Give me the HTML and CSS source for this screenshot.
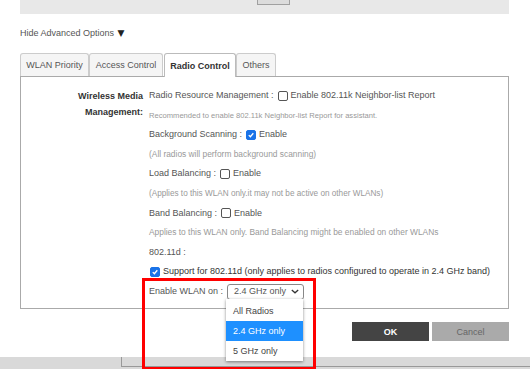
FILE: index.html
```html
<!DOCTYPE html>
<html>
<head>
<meta charset="utf-8">
<link rel="stylesheet" href="styles.css">
</head>
<body>
<div class="topbar"><span class="topbtn"></span></div>
<div class="advanced">Hide Advanced Options <span class="tri">▼</span></div>
<div class="tabs">
  <div class="tab t1">WLAN Priority</div>
  <div class="tab t2">Access Control</div>
  <div class="tab t3 active">Radio Control</div>
  <div class="tab t4">Others</div>
</div>
<div class="panel">
  <div class="label">Wireless Media<br>Management:</div>
  <div class="rows">
    <div class="row">Radio Resource Management : <span class="cb"></span> Enable 802.11k Neighbor-list Report</div>
    <div class="row note small">Recommended to enable 802.11k Neighbor-list Report for assistant.</div>
    <div class="row">Background Scanning : <span class="cb on"><svg viewBox="0 0 10 10"><path d="M2.2 5.2 L4.2 7.2 L7.9 2.8" fill="none" stroke="#fff" stroke-width="1.6"/></svg></span> Enable</div>
    <div class="row note">(All radios will perform background scanning)</div>
    <div class="row">Load Balancing : <span class="cb"></span> Enable</div>
    <div class="row note mid">(Applies to this WLAN only.it may not be active on other WLANs)</div>
    <div class="row">Band Balancing : <span class="cb"></span> Enable</div>
    <div class="row note">Applies to this WLAN only. Band Balancing might be enabled on other WLANs</div>
    <div class="row">802.11d :</div>
    <div class="row dark"><span class="cb on"><svg viewBox="0 0 10 10"><path d="M2.2 5.2 L4.2 7.2 L7.9 2.8" fill="none" stroke="#fff" stroke-width="1.6"/></svg></span> Support for 802.11d (only applies to radios configured to operate in 2.4 GHz band)</div>
    <div class="row">Enable WLAN on : <span class="select">2.4 GHz only<svg class="chev" viewBox="0 0 10 6"><path d="M1 1 L5 4.6 L9 1" fill="none" stroke="#333" stroke-width="1.6"/></svg></span></div>
  </div>
</div>
<div class="actions">
  <div class="btn ok">OK</div>
  <div class="btn cancel">Cancel</div>
</div>
<div class="bottom"><div class="bottombox"></div></div>
<div class="dropdown">
  <div class="opt">All Radios</div>
  <div class="opt sel">2.4 GHz only</div>
  <div class="opt">5 GHz only</div>
</div>
<div class="redbox"></div>
</body>
</html>
```
FILE: styles.css
```css
html, body { margin: 0; padding: 0; background: #fff; }
body {
  width: 530px; height: 369px; overflow: hidden; position: relative;
  font-family: "Liberation Sans", Arial, sans-serif; font-size: 9px; color: #555;
}
.topbar {
  margin-left: 20px; width: 489px; height: 14px; background: #e8e8e8;
  display: flex; align-items: flex-start;
}
.topbtn {
  margin-left: 237px; width: 31px; height: 4px; border: 1px solid #a0a0a0; border-top: 0;
  background: #dcdcdc;
}
.advanced { margin: 13px 0 0 20px; line-height: 12px; color: #555; }
.tri { font-size: 9px; color: #222; font-family: "DejaVu Sans", sans-serif; margin-left: 1px; }
.tabs { display: flex; margin: 14px 0 0 20px; height: 23px; }
.tab {
  border: 1px solid #ccc; border-bottom: 0; border-radius: 3px 3px 0 0; background: #f5f5f5;
  display: flex; align-items: center; justify-content: center; color: #555; height: 23px; box-sizing: border-box;
}
.t1 { width: 69px; }
.t2 { width: 74px; }
.t3 { width: 72px; margin-left: 1px; }
.t4 { width: 40px; }
.tab.active { background: #fff; color: #333; font-weight: bold; border-color: #bbb; height: 24px; position: relative; z-index: 1; }
.panel {
  margin-left: 20px; width: 489px; height: 233px; box-sizing: border-box;
  border: 1px solid #aaa; display: grid; grid-template-columns: 122px 1fr; column-gap: 6px;
  padding-top: 9px;
}
.label { text-align: right; font-weight: bold; color: #333; line-height: 16px; padding-top: 2px; }
.rows { display: flex; flex-direction: column; }
.row { line-height: 19.6px; height: 19.6px; white-space: nowrap; display: flex; align-items: center; gap: 3px; }
.row.note { color: #999; font-size: 8.4px; }
.row.note.small { font-size: 7.6px; }
.row.note.mid { font-size: 8.2px; }
.row.dark { color: #333; }
.cb {
  width: 8px; height: 8px; border: 1px solid #555; border-radius: 2px; display: inline-block; margin-left: 1px;
  background: #fff;
}
.cb.on { background: #1a73e8; border-color: #1a73e8; }
.cb svg { display: block; width: 8px; height: 8px; }
.select {
  margin-left: 1px; width: 77px; height: 16px; box-sizing: border-box; border: 1px solid #888; border-radius: 3px;
  display: flex; align-items: center; justify-content: space-between; padding: 0 4px 0 6px; color: #555;
}
.chev { width: 8px; height: 5px; }
.actions { display: flex; justify-content: flex-end; gap: 3px; margin: 13px 21px 0 0; }
.btn { width: 77px; height: 19px; display: flex; align-items: center; justify-content: center; }
.ok { background: #444; color: #fff; font-weight: bold; }
.cancel { background: #aaa; color: #666; }
.bottom { margin-top: 16px; height: 12px; background: #d9d9d9; padding-left: 121px; }
.bottombox { height: 9px; border-left: 1px solid #999; border-bottom: 1px solid #999; }
.dropdown {
  position: absolute; left: 226px; top: 299px; width: 77px; background: #fff;
  box-shadow: 0 1px 3px rgba(0,0,0,0.45); padding-top: 2px; padding-bottom: 0;
}
.opt { height: 20px; line-height: 20px; padding-left: 7px; color: #444; }
.opt.sel { background: #1e90ff; color: #fff; }
.redbox {
  position: absolute; left: 142px; top: 278px; width: 174px; height: 91px; box-sizing: border-box;
  border: 3px solid #ff0000; border-bottom-width: 2px;
}
```
